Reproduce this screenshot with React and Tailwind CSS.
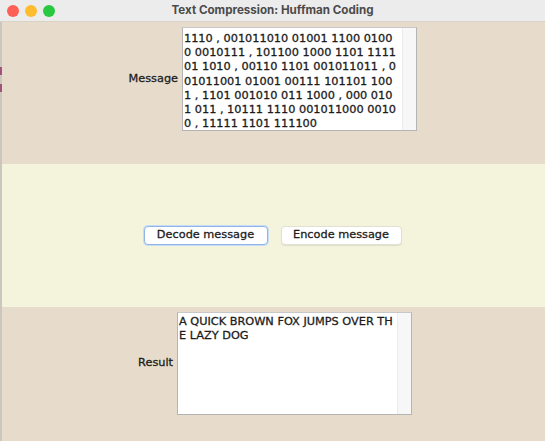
const messageLines = [
  "1110 , 001011010 01001 1100 0100",
  "0 0010111 , 101100 1000 1101 1111",
  "01 1010 , 00110 1101 001011011 , 0",
  "01011001 01001 00111 101101 100",
  "1 , 1101 001010 011 1000 , 000 010",
  "1 011 , 10111 1110 001011000 0010",
  "0 , 11111 1101 111100",
];

const resultLines = ["A QUICK BROWN FOX JUMPS OVER TH", "E LAZY DOG"];

const TextBox = ({ lines, className, textClass }) => (
  <div
    className={`flex bg-white border border-[#b4b4b4] border-t-[#c8c8c8] ${className}`}
  >
    <div className={`flex-1 pl-[1px] text-[11.3px] leading-[14.2px] text-[#1c1c1c] whitespace-pre [-webkit-text-stroke:0.3px_#1c1c1c] ${textClass}`}>
      {lines.map((line, i) => (
        <div key={i}>{line}</div>
      ))}
    </div>
    {/* empty vertical scroll track */}
    <div className="w-[14px] bg-[#f7f7f7] border-l border-[#ececec]" />
  </div>
);

export default function App() {
  return (
    <div className="w-[545px] h-[441px] flex flex-col bg-[#e7dccb] font-['DejaVu_Sans',sans-serif] overflow-hidden">

      {/* Title bar */}
      <div className="h-[22px] shrink-0 relative flex items-center justify-center bg-[#ececec] border-b border-[#d8d2c8]">
        <div className="absolute left-[7px] top-[5px] flex gap-[6px]">
          <span className="w-[12px] h-[12px] rounded-full bg-[#fe5f57]" />
          <span className="w-[12px] h-[12px] rounded-full bg-[#febc2e]" />
          <span className="w-[12px] h-[12px] rounded-full bg-[#28c840]" />
        </div>
        <span className="text-[11.6px] font-bold text-[#4a4a4a] font-['Inter',sans-serif]">
          Text Compression: Huffman Coding
        </span>
      </div>

      <div className="flex-1 flex">
        {/* edge of the window behind */}
        <div className="w-[2px] flex flex-col bg-[#cbc6be]">
          <div className="h-[45px]" />
          <div className="h-[8px] bg-[#a0547a]" />
          <div className="h-[9px]" />
          <div className="h-[8px] bg-[#a0547a]" />
        </div>

        <div className="flex-1 flex flex-col">
          {/* Message panel */}
          <div className="h-[142px] flex pt-[5px] pl-[116px]">
            <div className="h-[104px] flex items-center">
              <span className="w-[60px] text-right text-[11.3px] text-[#1c1c1c] mr-[4px] [-webkit-text-stroke:0.3px_#1c1c1c]">
                Message
              </span>
              <TextBox lines={messageLines} className="w-[235px] h-[104px]" textClass="pt-[4px]" />
            </div>
          </div>

          {/* Buttons panel */}
          <div className="h-[143px] flex items-center justify-center gap-[13px] bg-[#f4f3dc] pr-[2px]">
            <button className="w-[124px] h-[19px] rounded-[4px] bg-white border border-[#8fb6e6] shadow-[0_0_0_1px_#c6dcf5] text-[11.3px] text-[#1c1c1c] [-webkit-text-stroke:0.3px_#1c1c1c]">
              Decode message
            </button>
            <button className="w-[121px] h-[19px] rounded-[4px] bg-white border border-[#e2e0d2] shadow-[0_1px_1px_rgba(0,0,0,0.08)] text-[11.3px] text-[#1c1c1c] [-webkit-text-stroke:0.3px_#1c1c1c]">
              Encode message
            </button>
          </div>

          {/* Result panel */}
          <div className="flex-1 flex pt-[5px] pl-[111px]">
            <div className="h-[103px] flex items-center">
              <span className="w-[60px] text-right text-[11.3px] text-[#1c1c1c] mr-[4px] [-webkit-text-stroke:0.3px_#1c1c1c]">
                Result
              </span>
              <TextBox lines={resultLines} className="w-[235px] h-[103px]" textClass="pt-[2px]" />
            </div>
          </div>
        </div>
      </div>
    </div>
  );
}
